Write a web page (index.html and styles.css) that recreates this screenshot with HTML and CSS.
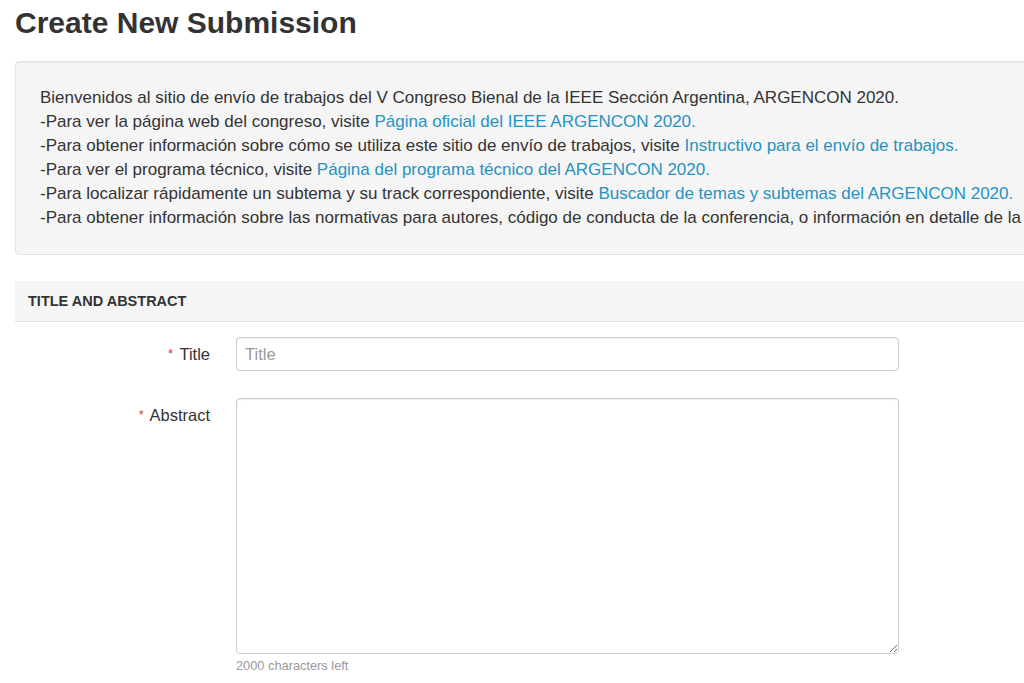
FILE: index.html
```html
<!DOCTYPE html>
<html lang="es">
<head>
<meta charset="utf-8">
<title>Create New Submission</title>
<link rel="stylesheet" href="styles.css">
</head>
<body>
<div class="page">
  <h1 class="page-title">Create New Submission</h1>
  <div class="well">
    <p>Bienvenidos al sitio de envío de trabajos del V Congreso Bienal de la IEEE Sección Argentina, ARGENCON 2020.</p>
    <p>-Para ver la página web del congreso, visite <a href="#">Página oficial del IEEE ARGENCON 2020.</a></p>
    <p>-Para obtener información sobre cómo se utiliza este sitio de envío de trabajos, visite <a href="#">Instructivo para el envío de trabajos.</a></p>
    <p>-Para ver el programa técnico, visite <a href="#">Página del programa técnico del ARGENCON 2020.</a></p>
    <p>-Para localizar rápidamente un subtema y su track correspondiente, visite <a href="#">Buscador de temas y subtemas del ARGENCON 2020.</a></p>
    <p>-Para obtener información sobre las normativas para autores, código de conducta de la conferencia, o información en detalle de la conferencia, visite <a href="#">Página oficial.</a></p>
  </div>
  <div class="section-head">TITLE AND ABSTRACT</div>
  <form class="form">
    <div class="row">
      <label class="label" for="title"><span class="req">*</span> Title</label>
      <div class="field"><input id="title" class="input" type="text" placeholder="Title"></div>
    </div>
    <div class="row">
      <label class="label" for="abstract"><span class="req">*</span> Abstract</label>
      <div class="field">
        <textarea id="abstract" class="input textarea"></textarea>
        <div class="help">2000 characters left</div>
      </div>
    </div>
  </form>
</div>
</body>
</html>
```
FILE: styles.css
```css
html, body {
  margin: 0;
  padding: 0;
  overflow: hidden;
  background: #fff;
}
body {
  font-family: "Liberation Sans", Arial, sans-serif;
  color: #333;
  font-size: 17px;
  line-height: 24px;
}
.page {
  width: 1200px;
  padding-left: 15px;
}
.page-title {
  margin: 0;
  padding-top: 4px;
  font-size: 30px;
  line-height: 38px;
  font-weight: bold;
  color: #333;
  height: 57px;
}
.well {
  background: #f5f5f5;
  border: 1px solid #e3e3e3;
  border-radius: 4px;
  box-shadow: inset 0 1px 1px rgba(0,0,0,0.05);
  padding: 24px 24px;
  white-space: nowrap;
  overflow: hidden;
}
.well p {
  margin: 0;
}
.well a {
  color: #2593c2;
  text-decoration: none;
}
.section-head {
  margin-top: 26px;
  background: #f5f5f5;
  border-bottom: 1px solid #e3e3e3;
  height: 40px;
  line-height: 40px;
  padding-left: 13px;
  font-size: 14.5px;
  font-weight: bold;
  color: #333;
}
.form {
  padding-top: 15px;
}
.row {
  display: grid;
  grid-template-columns: 195px 663px;
  column-gap: 26px;
  margin-bottom: 27px;
}
.label {
  text-align: right;
  padding-top: 5px;
  font-size: 16.5px;
}
.req {
  color: #c9413e;
  font-size: 13px;
  vertical-align: 2px;
  margin-right: 2px;
}
.input {
  display: block;
  box-sizing: border-box;
  width: 100%;
  height: 34px;
  border: 1px solid #ccc;
  border-radius: 4px;
  box-shadow: inset 0 1px 1px rgba(0,0,0,0.075);
  padding: 6px 8px;
  font-family: "Liberation Sans", Arial, sans-serif;
  font-size: 16.5px;
  color: #555;
  background: #fff;
  margin: 0;
}
.input::placeholder {
  color: #999;
}
.textarea {
  height: 256px;
  resize: vertical;
}
.help {
  margin-top: 3px;
  font-size: 12.8px;
  line-height: 17px;
  color: #999;
}
```
